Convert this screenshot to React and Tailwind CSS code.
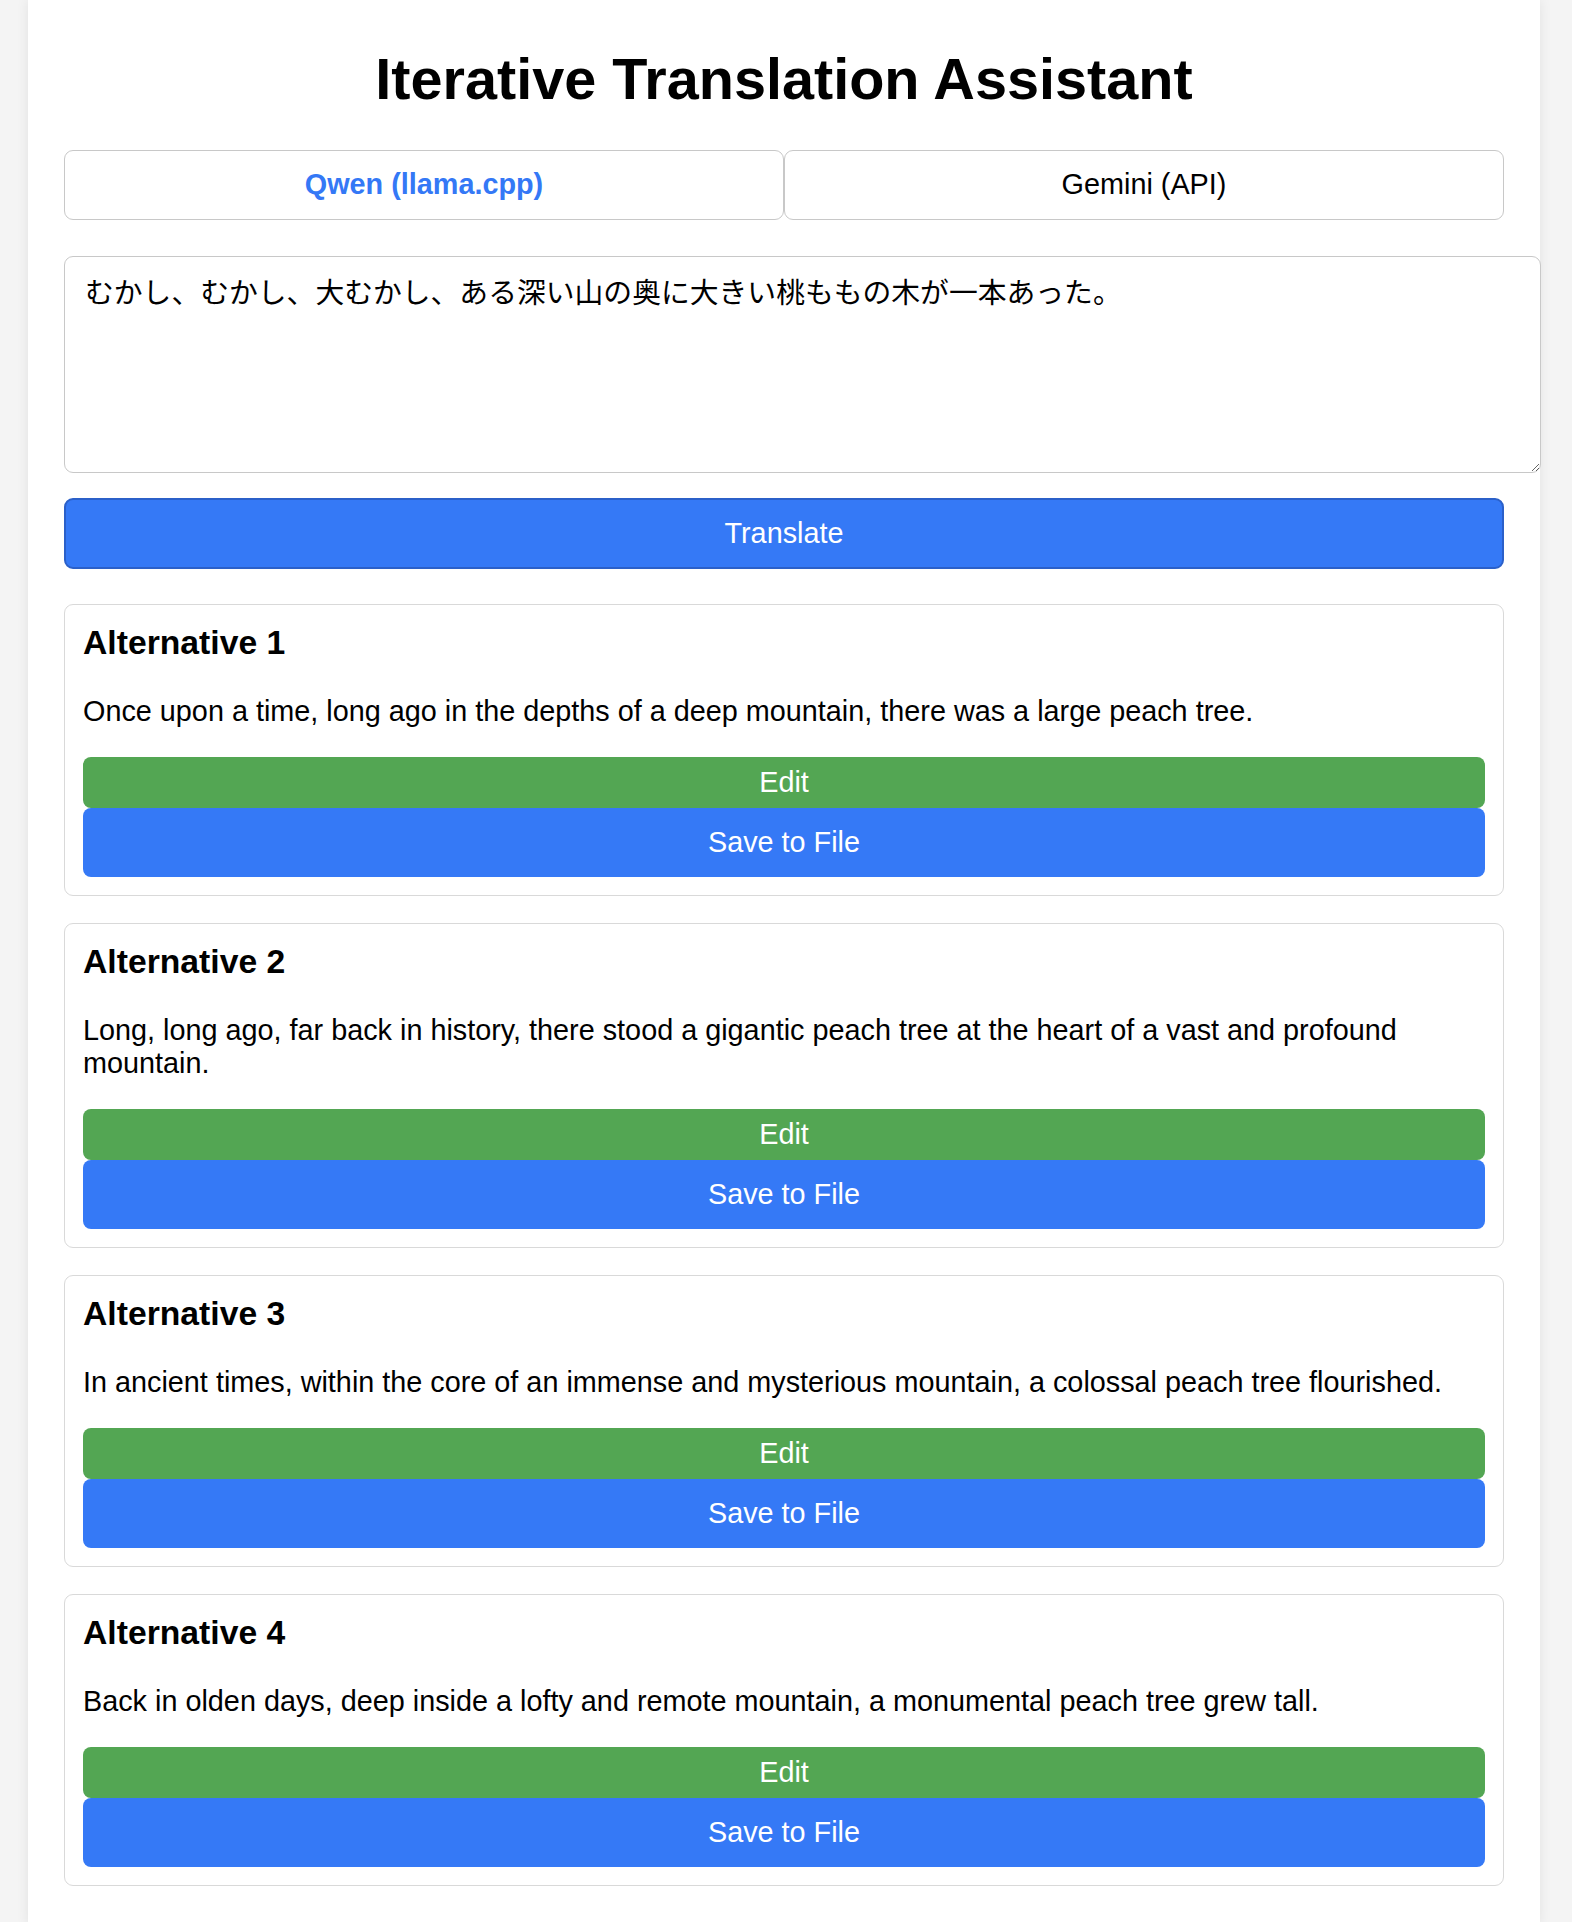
import { useState } from 'react';

const alternatives = [
  'Once upon a time, long ago in the depths of a deep mountain, there was a large peach tree.',
  'Long, long ago, far back in history, there stood a gigantic peach tree at the heart of a vast and profound mountain.',
  'In ancient times, within the core of an immense and mysterious mountain, a colossal peach tree flourished.',
  'Back in olden days, deep inside a lofty and remote mountain, a monumental peach tree grew tall.',
];

export default function App() {
  const [model, setModel] = useState('qwen');
  const [source, setSource] = useState('むかし、むかし、大むかし、ある深い山の奥に大きい桃ももの木が一本あった。');

  const font = { fontFamily: '"Liberation Sans", Arial, "Noto Sans CJK JP", sans-serif' };

  return (
    <div className="min-h-screen bg-[#f4f4f4]" style={font}>
      <div className="ml-[28px] w-[1512px] min-h-screen bg-white px-[36px] pt-[46px] pb-[39px] shadow-[0_0_12px_rgba(0,0,0,0.08)] text-black">
        <h1 className="m-0 mb-[38px] text-center text-[57.6px] leading-[66px] font-bold">
          Iterative Translation Assistant
        </h1>

        {/* Model tabs */}
        <div className="flex">
          <button
            onClick={() => setModel('qwen')}
            className={`flex-1 h-[70px] border border-[#c8c8c8] rounded-[9px] bg-white text-[28.8px] ${
              model === 'qwen' ? 'font-bold text-[#3478f6]' : 'text-black'
            }`}
          >
            Qwen (llama.cpp)
          </button>
          <button
            onClick={() => setModel('gemini')}
            className={`flex-1 h-[70px] border border-[#c8c8c8] rounded-[9px] bg-white text-[28.8px] ${
              model === 'gemini' ? 'font-bold text-[#3478f6]' : 'text-black'
            }`}
          >
            Gemini (API)
          </button>
        </div>

        <textarea
          value={source}
          onChange={(e) => setSource(e.target.value)}
          className="block mt-[36px] w-[1477px] h-[217px] border border-[#c8c8c8] rounded-[9px] pt-[20px] px-[20px] text-[28.8px] leading-[33px] outline-none"
          style={{ fontFamily: '"Liberation Sans", "Noto Sans CJK JP", sans-serif' }}
        />

        <button className="block mt-[25px] w-full h-[71px] bg-[#3579f6] border-2 border-[#2b60c9] rounded-[9px] text-white text-[28.8px]">
          Translate
        </button>

        {/* Alternatives */}
        <div className="mt-[35px] flex flex-col gap-[27px]">
          {alternatives.map((text, i) => (
            <div key={i} className="border border-[#d9d9d9] rounded-[9px] p-[18px]">
              <h3 className="m-0 text-[33.7px] leading-[39px] font-bold">Alternative {i + 1}</h3>
              <p className="mt-[33px] text-[28.8px] leading-[33px]">{text}</p>
              <button className="block mt-[29px] w-full h-[51px] bg-[#53a653] rounded-[8px] text-white text-[28.8px]">
                Edit
              </button>
              <button className="block w-full h-[69px] bg-[#3579f6] rounded-[8px] text-white text-[28.8px]">
                Save to File
              </button>
            </div>
          ))}
        </div>
      </div>
    </div>
  );
}
